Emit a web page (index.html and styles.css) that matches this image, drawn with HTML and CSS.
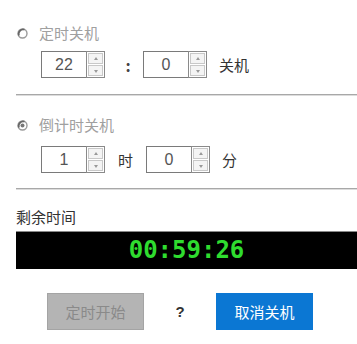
FILE: index.html
```html
<!DOCTYPE html>
<html>
<head>
<meta charset="utf-8">
<link rel="stylesheet" href="styles.css">
</head>
<body>
<div class="page">
  <div class="radio-row">
    <svg class="radio" width="11" height="11" viewBox="0 0 11 11"><circle cx="5.5" cy="5.5" r="4.5" fill="#fff" stroke="#9a9a9a" stroke-width="1.4"/><path d="M2 7.5 A4.5 4.5 0 0 1 7.5 1.6" fill="none" stroke="#666" stroke-width="1.8"/></svg>
    <span class="radio-label">定时关机</span>
  </div>
  <div class="spin-row">
    <div class="spin"><div class="spin-value">22</div><div class="spin-btns"><div class="btn up"></div><div class="btn down"></div></div></div>
    <span class="colon">:</span>
    <div class="spin"><div class="spin-value">0</div><div class="spin-btns"><div class="btn up"></div><div class="btn down"></div></div></div>
    <span class="unit">关机</span>
  </div>
  <div class="divider"></div>

  <div class="radio-row second">
    <svg class="radio" width="11" height="11" viewBox="0 0 11 11"><circle cx="5.5" cy="5.5" r="4.5" fill="#fff" stroke="#9a9a9a" stroke-width="1.4"/><path d="M2 7.5 A4.5 4.5 0 0 1 7.5 1.6" fill="none" stroke="#666" stroke-width="1.8"/><circle cx="5.5" cy="5.5" r="2" fill="#777"/></svg>
    <span class="radio-label">倒计时关机</span>
  </div>
  <div class="spin-row second-spin">
    <div class="spin"><div class="spin-value">1</div><div class="spin-btns"><div class="btn up"></div><div class="btn down"></div></div></div>
    <span class="unit mid">时</span>
    <div class="spin"><div class="spin-value">0</div><div class="spin-btns"><div class="btn up"></div><div class="btn down"></div></div></div>
    <span class="unit">分</span>
  </div>
  <div class="divider second-div"></div>

  <div class="remain-label">剩余时间</div>
  <div class="timer">00:59:26</div>

  <div class="actions">
    <div class="button disabled">定时开始</div>
    <span class="help">?</span>
    <div class="button primary">取消关机</div>
  </div>
</div>
</body>
</html>
```

FILE: styles.css
```css
html, body {
  margin: 0;
  padding: 0;
  background: #fff;
}
body {
  font-family: "Noto Sans CJK SC", "Noto Sans", sans-serif;
  color: #333;
  overflow: hidden;
}
.page {
  padding: 24px 0 0 16px;
}
.radio-row {
  display: flex;
  align-items: center;
  height: 18px;
}
.radio {
  margin-left: 1px;
  margin-right: 11px;
}
.radio-label {
  font-size: 15px;
  color: #a0a0a0;
  line-height: 18px;
}
.spin-row {
  display: flex;
  align-items: center;
  margin-top: 9px;
  padding-left: 25px;
  height: 27px;
}
.spin-row.second-spin {
  margin-top: 12px;
}
.spin {
  display: flex;
  width: 64px;
  height: 27px;
  box-sizing: border-box;
}
.spin-value {
  width: 45px;
  box-sizing: border-box;
  border: 1px solid #7a7a7a;
  border-right: none;
  font-family: "Liberation Sans", Arial, sans-serif;
  font-size: 16px;
  color: #555;
  text-align: center;
  line-height: 25px;
}
.spin-btns {
  width: 19px;
  display: flex;
  flex-direction: column;
  border: 1px solid #8a8a8a;
  box-sizing: border-box;
  background: #fff;
}
.btn {
  flex: 1;
  position: relative;
  border: 1px solid #c8c8c8;
  margin: 1px;
  background: #f4f4f4;
}
.btn.up { margin-bottom: 0; }
.btn::after {
  content: "";
  position: absolute;
  left: 50%;
  top: 50%;
  margin-left: -2px;
  border-left: 2px solid transparent;
  border-right: 2px solid transparent;
}
.btn.up::after {
  margin-top: -2px;
  border-bottom: 3px solid #999;
}
.btn.down::after {
  margin-top: -1px;
  border-top: 3px solid #999;
}
.colon {
  width: 38px;
  text-align: center;
  font-size: 16px;
  font-weight: bold;
  color: #444;
  padding-left: 8px;
  box-sizing: border-box;
}
.unit {
  font-size: 15px;
  color: #333;
  margin-left: 12px;
}
.unit.mid {
  margin-left: 13px;
  margin-right: 13px;
}
.divider {
  margin-top: 16px;
  height: 1px;
  border-top: 1px solid #a8a8a8;
  background: #dcdcdc;
}
.radio-row.second {
  margin-top: 20px;
}
.second-div {
  margin-top: 15px;
}
.remain-label {
  margin-top: 18px;
  font-size: 15px;
  line-height: 18px;
  color: #333;
}
.timer {
  margin-top: 5px;
  height: 38px;
  background: #000;
  border-top: 1px solid #888;
  box-sizing: border-box;
  color: #2fdc2f;
  font-family: "DejaVu Sans Mono", "Liberation Mono", monospace;
  font-size: 24px;
  font-weight: bold;
  text-align: center;
  line-height: 36px;
}
.actions {
  display: flex;
  align-items: center;
  margin-top: 24px;
  padding-left: 31px;
}
.button {
  width: 97px;
  height: 37px;
  box-sizing: border-box;
  font-size: 15px;
  text-align: center;
  line-height: 37px;
}
.button.disabled {
  background: #b4b4b4;
  color: #8a8a8a;
  border: 1px solid #a4a4a4;
  line-height: 35px;
}
.button.primary {
  background: #0b77d3;
  color: #fff;
}
.help {
  width: 72px;
  text-align: center;
  font-family: "Liberation Sans", Arial, sans-serif;
  font-weight: bold;
  font-size: 15px;
  color: #333;
}
```
